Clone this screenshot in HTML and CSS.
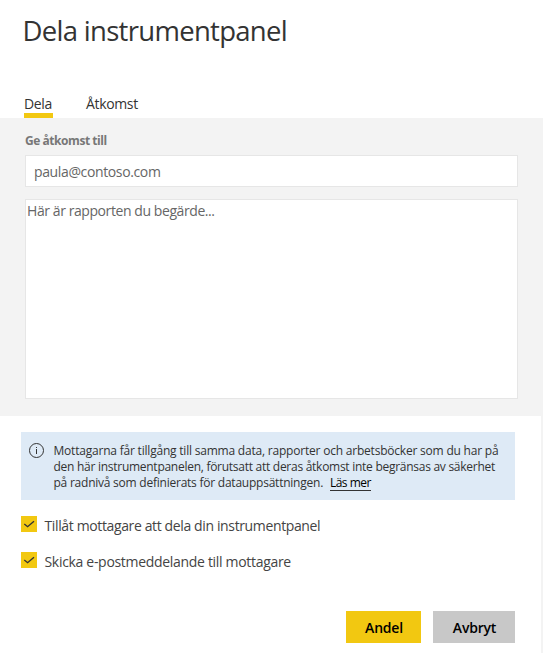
FILE: index.html
```
<!DOCTYPE html>
<html lang="sv">
<head>
<meta charset="utf-8">
<title>Dela instrumentpanel</title>
<link rel="stylesheet" href="styles.css">
</head>
<body>
<header class="header">
  <h1 class="title">Dela instrumentpanel</h1>
  <nav class="tabs">
    <a class="tab active">Dela</a>
    <a class="tab">Åtkomst</a>
  </nav>
</header>
<section class="form">
  <label class="label">Ge åtkomst till</label>
  <div class="email">paula@contoso.com</div>
  <div class="message">Här är rapporten du begärde...</div>
</section>
<footer class="footer">
  <div class="info">
    <svg class="info-icon" width="16" height="16" viewBox="0 0 16 16">
      <circle cx="7.5" cy="7.5" r="7" fill="none" stroke="#333" stroke-width="1"/>
      <path d="M7.5 6V11M7.5 4V5" fill="none" stroke="#333" stroke-width="1"/>
    </svg>
    <p class="info-text">
      <span class="line line-a">Mottagarna får tillgång till samma data, rapporter och arbetsböcker som du har på</span>
      <span class="line line-b">den här instrumentpanelen, förutsatt att deras åtkomst inte begränsas av säkerhet</span>
      <span class="line line-c">på radnivå som definierats för datauppsättningen. <a class="more">Läs mer</a></span>
    </p>
  </div>
  <div class="option">
    <svg class="check" width="16" height="16" viewBox="0 0 16 16"><path d="M3.3 8L6.6 10.7L13 5.2" fill="none" stroke="#333" stroke-width="1.4"/></svg>
    <span class="option-text tight">Tillåt mottagare att dela din instrumentpanel</span>
  </div>
  <div class="option">
    <svg class="check" width="16" height="16" viewBox="0 0 16 16"><path d="M3.3 8L6.6 10.7L13 5.2" fill="none" stroke="#333" stroke-width="1.4"/></svg>
    <span class="option-text">Skicka e-postmeddelande till mottagare</span>
  </div>
  <div class="actions">
    <button class="button primary">Andel</button>
    <button class="button">Avbryt</button>
  </div>
</footer>
</body>
</html>
```
FILE: styles.css
```
* { box-sizing: border-box; }
body {
  margin: 0;
  height: 653px;
  overflow: hidden;
  display: flex;
  flex-direction: column;
  background: #fff;
  color: #333;
  font: 14px/20px "Open Sans", "Noto Sans", sans-serif;
}
.header { height: 118px; padding: 11px 24px 0 22.5px; display: flex; flex-direction: column; }
.title { margin: 0; font-size: 27.5px; line-height: 40px; font-weight: 400; letter-spacing: -0.7px; white-space: nowrap; }
.tabs { display: flex; gap: 33px; margin-top: auto; padding-left: 1.5px; }
.tab { height: 24px; letter-spacing: -0.35px; }
.active { width: 29px; border-bottom: 5px solid #f2c811; }
.form { height: 298px; padding: 13px 25px 0; background: #f3f3f3; color: #666; }
.label { display: block; font-size: 12px; font-weight: 700; color: #777; letter-spacing: -0.45px; }
.email, .message { background: #fff; border: 1px solid #e6e6e6; }
.email { height: 32px; margin-top: 4px; padding: 6px 8px; letter-spacing: -0.37px; }
.message { height: 200px; margin-top: 12px; padding: 1px; letter-spacing: -0.42px; }
.footer { flex: 1; padding: 16px 26px 0 21px; border-right: 2px solid #f3f3f3; }
.info { display: flex; height: 68px; width: 494px; padding: 11px 8px; background: #deeaf6; }
.info-icon { flex: none; margin-right: 8.5px; }
.info-text { margin: 0; font-size: 12px; line-height: 16px; }
.line { display: block; white-space: nowrap; }
.line-a { letter-spacing: -0.207px; }
.line-b { letter-spacing: -0.27px; }
.line-c { letter-spacing: -0.235px; }
.more { display: inline-block; height: 16px; margin-left: 4px; border-bottom: 1px solid #333; color: #000; letter-spacing: -0.5px; }
.option { display: flex; align-items: flex-start; height: 20px; margin-top: 16px; }
.check { flex: none; margin-right: 7.5px; background: #f2c811; }
.option-text { color: #444; line-height: 20px; letter-spacing: -0.31px; white-space: nowrap; }
.tight { letter-spacing: -0.37px; }
.actions { display: flex; gap: 12px; margin: 39px 0 0 325px; }
.button { width: 82px; height: 32px; padding: 2px 0 0 1px; border: 0; background: #c8c8c8; color: #000; font: 600 14px/20px "Open Sans", sans-serif; letter-spacing: -0.2px; }
.primary { width: 75px; background: #f2c811; }
```
